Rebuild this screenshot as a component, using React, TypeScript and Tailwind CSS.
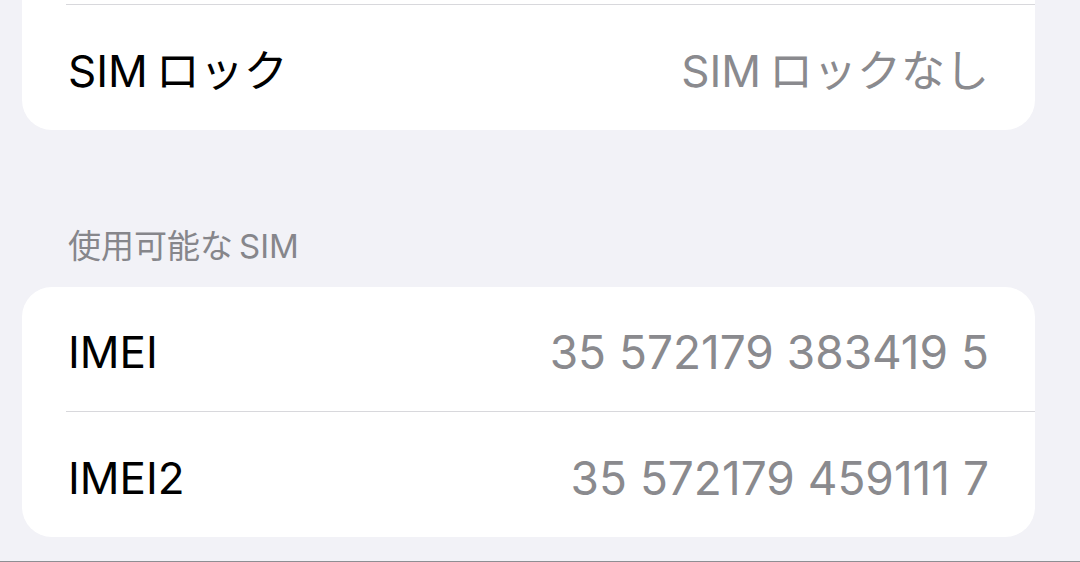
import React from "react";

const font = { fontFamily: '"Inter", "Noto Sans CJK JP", sans-serif' };

function Row({
  label,
  value,
  numeric = false,
}: {
  label: string;
  value: string;
  numeric?: boolean;
}) {
  return (
    <div className="flex items-center justify-between h-[124px] pt-[6px] pl-[46px] pr-[46px]">
      <span className="text-[44px] text-black leading-none">{label}</span>
      <span
        className={
          numeric
            ? "text-[46px] text-[#8a8a8e] leading-none"
            : "text-[44px] text-[#8a8a8e] leading-none"
        }
      >
        {value}
      </span>
    </div>
  );
}

export default function App() {
  return (
    <div
      className="w-[1080px] h-[562px] bg-[#f2f2f7] overflow-hidden flex flex-col border-b border-[#8e8e93]"
      style={font}
    >
      <div className="mx-[22px] w-[1013px] bg-white rounded-b-[30px]">
        <div className="h-[4px]" />
        <div className="ml-[44px] h-px bg-[#d8d8dc]" />
        <div className="pt-px">
          <Row label={"SIM\u2009ロック"} value={"SIM\u2009ロックなし"} />
        </div>
      </div>

      <div className="pt-[96px] pb-[21px] pl-[68px] h-[157px]">
        <p className="text-[33px] leading-[40px] text-[#86868b]">{"使用可能な\u2009SIM"}</p>
      </div>

      <div className="mx-[22px] w-[1013px] bg-white rounded-[30px]">
        <Row label="IMEI" value="35 572179 383419 5" numeric />
        <div className="ml-[44px] h-px bg-[#d8d8dc]" />
        <div className="pt-px">
          <Row label="IMEI2" value="35 572179 459111 7" numeric />
        </div>
      </div>
    </div>
  );
}
